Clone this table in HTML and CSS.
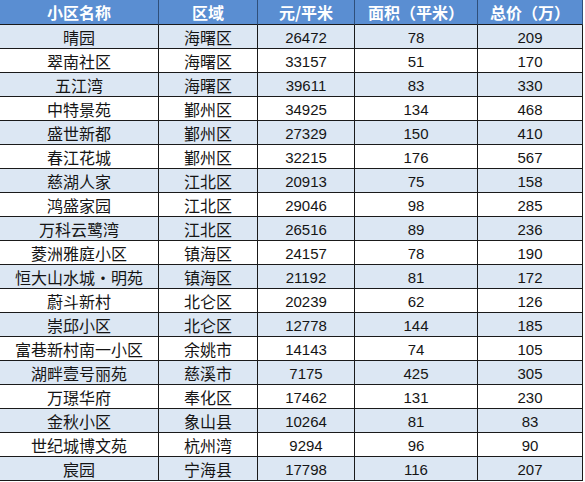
FILE: index.html
```html
<!DOCTYPE html>
<html lang="zh">
<head>
<meta charset="utf-8">
<title>小区房价</title>
<link rel="stylesheet" href="styles.css">
</head>
<body>
<div class="table">
  <div class="row head"><div>小区名称</div><div>区域</div><div>元/平米</div><div>面积（平米）</div><div>总价（万）</div></div>
  <div class="row alt"><div>晴园</div><div>海曙区</div><div class="n">26472</div><div class="n">78</div><div class="n">209</div></div>
  <div class="row"><div>翠南社区</div><div>海曙区</div><div class="n">33157</div><div class="n">51</div><div class="n">170</div></div>
  <div class="row alt"><div>五江湾</div><div>海曙区</div><div class="n">39611</div><div class="n">83</div><div class="n">330</div></div>
  <div class="row"><div>中特景苑</div><div>鄞州区</div><div class="n">34925</div><div class="n">134</div><div class="n">468</div></div>
  <div class="row alt"><div>盛世新都</div><div>鄞州区</div><div class="n">27329</div><div class="n">150</div><div class="n">410</div></div>
  <div class="row"><div>春江花城</div><div>鄞州区</div><div class="n">32215</div><div class="n">176</div><div class="n">567</div></div>
  <div class="row alt"><div>慈湖人家</div><div>江北区</div><div class="n">20913</div><div class="n">75</div><div class="n">158</div></div>
  <div class="row"><div>鸿盛家园</div><div>江北区</div><div class="n">29046</div><div class="n">98</div><div class="n">285</div></div>
  <div class="row alt"><div>万科云鹭湾</div><div>江北区</div><div class="n">26516</div><div class="n">89</div><div class="n">236</div></div>
  <div class="row"><div>菱洲雅庭小区</div><div>镇海区</div><div class="n">24157</div><div class="n">78</div><div class="n">190</div></div>
  <div class="row alt"><div>恒大山水城・明苑</div><div>镇海区</div><div class="n">21192</div><div class="n">81</div><div class="n">172</div></div>
  <div class="row"><div>蔚斗新村</div><div>北仑区</div><div class="n">20239</div><div class="n">62</div><div class="n">126</div></div>
  <div class="row alt"><div>崇邱小区</div><div>北仑区</div><div class="n">12778</div><div class="n">144</div><div class="n">185</div></div>
  <div class="row"><div>富巷新村南一小区</div><div>余姚市</div><div class="n">14143</div><div class="n">74</div><div class="n">105</div></div>
  <div class="row alt"><div>湖畔壹号丽苑</div><div>慈溪市</div><div class="n">7175</div><div class="n">425</div><div class="n">305</div></div>
  <div class="row"><div>万璟华府</div><div>奉化区</div><div class="n">17462</div><div class="n">131</div><div class="n">230</div></div>
  <div class="row alt"><div>金秋小区</div><div>象山县</div><div class="n">10264</div><div class="n">81</div><div class="n">83</div></div>
  <div class="row"><div>世纪城博文苑</div><div>杭州湾</div><div class="n">9294</div><div class="n">96</div><div class="n">90</div></div>
  <div class="row alt"><div>宸园</div><div>宁海县</div><div class="n">17798</div><div class="n">116</div><div class="n">207</div></div>
</div>
</body>
</html>
```

FILE: styles.css
```css
html, body {
  margin: 0;
  padding: 0;
  background: #ffffff;
}

.table {
  width: 583px;
  font-family: "Noto Sans CJK SC", "Noto Sans", sans-serif;
  color: #151515;
}

.row {
  display: grid;
  grid-template-columns: 159px 99px 97px 123px 105px;
  height: 24px;
}

.row > div {
  box-sizing: border-box;
  border-right: 1px solid #1a1a1a;
  border-bottom: 1px solid #1a1a1a;
  display: flex;
  align-items: center;
  justify-content: center;
  font-size: 16px;
  line-height: 1;
  white-space: nowrap;
  overflow: hidden;
}

.row.alt > div {
  background: #dce7f3;
}

.row.head {
  height: 25px;
}

.row.head > div {
  background: #5a8ed2;
  color: #ffffff;
  font-weight: 700;
  font-size: 16px;
  border-right-color: #2f4f7a;
}

.row > div.n {
  font-family: "Liberation Sans", sans-serif;
  font-size: 15px;
  padding-top: 1px;
}
```
